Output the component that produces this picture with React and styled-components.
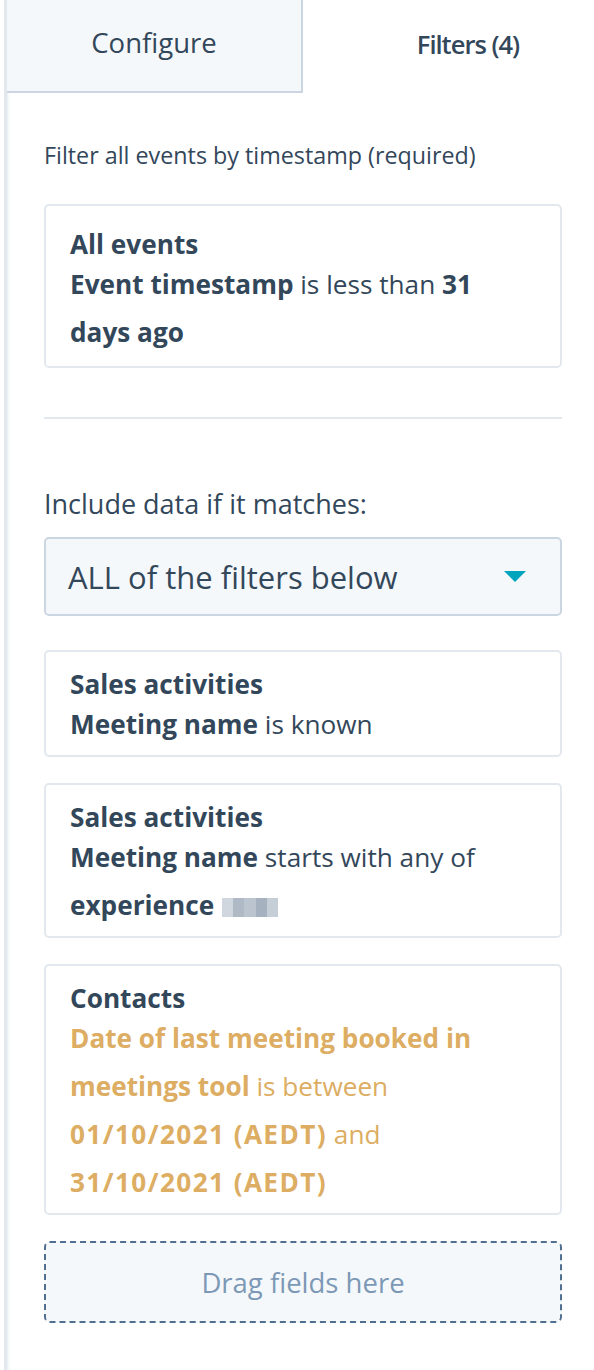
import React from 'react';
import styled, { createGlobalStyle } from 'styled-components';

const GlobalStyle = createGlobalStyle`
  html, body {
    margin: 0;
    padding: 0;
    background: #ffffff;
  }
  body {
    font-family: "Open Sans", Lato, sans-serif;
    color: #33475b;
  }
`;

const Page = styled.div`
  width: 594px;
  height: 1370px;
  overflow: hidden;
  padding-left: 4px;
  box-sizing: border-box;
`;

const Panel = styled.div`
  height: 100%;
  border-left: 3px solid #e3e8ee;
  box-shadow: inset 2px 0 3px -1px rgba(203, 214, 226, 0.5);
`;

const Tabs = styled.div`
  display: grid;
  grid-template-columns: 296px 330px;
  height: 93px;
`;

const Tab = styled.div`
  display: flex;
  align-items: center;
  justify-content: center;
  box-sizing: border-box;
  font-size: ${p => (p.active ? '25.5px' : '27.5px')};
  padding-bottom: 6px;
  color: #33475b;
  background: ${p => (p.active ? '#ffffff' : '#f5f8fa')};
  border-right: ${p => (p.active ? 'none' : '2px solid #cbd6e2')};
  border-bottom: ${p => (p.active ? 'none' : '2px solid #cbd6e2')};
  font-weight: ${p => (p.active ? 600 : 400)};
  letter-spacing: ${p => (p.active ? '-1px' : '0')};
`;

const Content = styled.div`
  padding: 48px 32px 0 37px;
`;

const Hint = styled.div`
  font-size: 23.3px;
  line-height: 28px;
  margin-bottom: 35px;
`;

const Card = styled.div`
  border: 2px solid #e3e8ef;
  border-radius: 5px;
  padding: ${p => (p.roomy ? '22px 24px 10px' : '16px 24px 7px')};
  margin-bottom: 26px;
  font-size: 26.2px;
`;

const CardTitle = styled.div`
  font-weight: 700;
  line-height: 32px;
`;

const CardBody = styled.div`
  line-height: 48px;
  color: ${p => p.tone || '#33475b'};
`;

const Strong = styled.strong`
  font-weight: 700;
`;

// dates render wider in the original face, pad them out a bit
const DateValue = styled.strong`
  font-weight: 700;
  letter-spacing: 1.4px;
`;

const Redacted = styled.span`
  display: inline-block;
  width: 56px;
  height: 19px;
  margin-left: 8px;
  vertical-align: -2px;
  background:
    linear-gradient(90deg, #c4ccd6 0 20%, #9aa8b7 20% 40%, #aab6c3 40% 60%, #8f9eaf 60% 80%, #b7c1cc 80% 100%);
  opacity: 0.8;
`;

const Divider = styled.hr`
  border: none;
  border-top: 2px solid #e3e8ef;
  margin: 49px 0 70px;
`;

const Label = styled.div`
  font-size: 27px;
  font-weight: 500;
  line-height: 30px;
  margin-bottom: 18px;
`;

const Select = styled.div`
  display: flex;
  align-items: center;
  justify-content: space-between;
  height: 79px;
  box-sizing: border-box;
  padding: 0 34px 0 22px;
  background: #f5f8fa;
  border: 2px solid #cbd6e2;
  border-radius: 5px;
  font-size: 31px;
  margin-bottom: 34px;
`;

const Caret = styled.span`
  width: 0;
  height: 0;
  border-left: 11px solid transparent;
  border-right: 11px solid transparent;
  border-top: 11px solid #00a4bd;
`;

const DropZone = styled.div`
  display: flex;
  align-items: center;
  justify-content: center;
  height: 82px;
  box-sizing: border-box;
  background: #f5f8fa;
  border: 2px dashed #516f90;
  border-radius: 6px;
  color: #7c98b6;
  font-size: 27.5px;
`;

const gold = '#dcad62';

const App = () => (
  <>
    <GlobalStyle />
    <Page>
      <Panel>
        <Tabs>
          <Tab>Configure</Tab>
          <Tab active>Filters (4)</Tab>
        </Tabs>
        <Content>
          <Hint>Filter all events by timestamp (required)</Hint>
          <Card roomy>
            <CardTitle>All events</CardTitle>
            <CardBody>
              <Strong>Event timestamp</Strong> is less than <Strong>31 days ago</Strong>
            </CardBody>
          </Card>
          <Divider />
          <Label>Include data if it matches:</Label>
          <Select>
            <span>ALL of the filters below</span>
            <Caret />
          </Select>
          <Card>
            <CardTitle>Sales activities</CardTitle>
            <CardBody>
              <Strong>Meeting name</Strong> is known
            </CardBody>
          </Card>
          <Card>
            <CardTitle>Sales activities</CardTitle>
            <CardBody>
              <Strong>Meeting name</Strong> starts with any of <Strong>experience</Strong>
              <Redacted />
            </CardBody>
          </Card>
          <Card>
            <CardTitle>Contacts</CardTitle>
            <CardBody tone={gold}>
              <Strong>Date of last meeting booked in meetings tool</Strong> is between{' '}
              <DateValue>01/10/2021 (AEDT)</DateValue> and <DateValue>31/10/2021 (AEDT)</DateValue>
            </CardBody>
          </Card>
          <DropZone>Drag fields here</DropZone>
        </Content>
      </Panel>
    </Page>
  </>
);

export default App;
